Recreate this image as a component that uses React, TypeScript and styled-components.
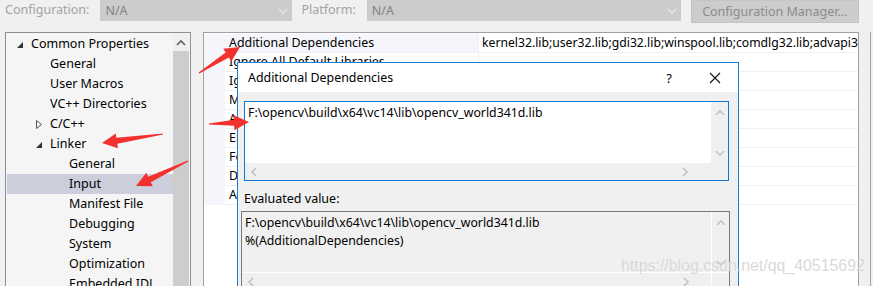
import React from 'react'
import styled, { createGlobalStyle } from 'styled-components'

const GlobalStyle = createGlobalStyle`
  html, body {
    margin: 0;
    padding: 0;
    background: #f0f0f0;
  }
  body {
    font-family: "Noto Sans", "Open Sans", sans-serif;
    font-size: 12px;
    color: #000;
  }
`

type TreeItem = { label: string; level: number; toggle?: 'open' | 'closed'; selected?: boolean }

const treeItems: TreeItem[] = [
  { label: 'Common Properties', level: 0, toggle: 'open' },
  { label: 'General', level: 1 },
  { label: 'User Macros', level: 1 },
  { label: 'VC++ Directories', level: 1 },
  { label: 'C/C++', level: 1, toggle: 'closed' },
  { label: 'Linker', level: 1, toggle: 'open' },
  { label: 'General', level: 2 },
  { label: 'Input', level: 2, selected: true },
  { label: 'Manifest File', level: 2 },
  { label: 'Debugging', level: 2 },
  { label: 'System', level: 2 },
  { label: 'Optimization', level: 2 },
  { label: 'Embedded IDL', level: 2 },
]

const properties = [
  { name: 'Additional Dependencies', value: 'kernel32.lib;user32.lib;gdi32.lib;winspool.lib;comdlg32.lib;advapi32.lib;shell32.lib;ole32.lib' },
  { name: 'Ignore All Default Libraries', value: '' },
  { name: 'Ignore Specific Default Libraries', value: '' },
  { name: 'Module Definition File', value: '' },
  { name: 'Add Module to Assembly', value: '' },
  { name: 'Embed Managed Resource File', value: '' },
  { name: 'Force Symbol References', value: '' },
  { name: 'Delay Loaded Dlls', value: '' },
  { name: 'Assembly Link Resource', value: '' },
]

// red annotation arrows: tail -> tip in page coordinates
const arrows = [
  { x1: 199, y1: 73, x2: 240, y2: 47 },
  { x1: 209, y1: 124, x2: 249, y2: 122 },
  { x1: 163, y1: 134, x2: 102, y2: 143 },
  { x1: 188, y1: 161, x2: 136, y2: 186 },
]

const arrowPoints = (a: { x1: number; y1: number; x2: number; y2: number }) => {
  const dx = a.x2 - a.x1
  const dy = a.y2 - a.y1
  const len = Math.hypot(dx, dy)
  const ux = dx / len
  const uy = dy / len
  const nx = -uy
  const ny = ux
  const head = 15
  const bx = a.x2 - ux * head
  const by = a.y2 - uy * head
  const pts = [
    [a.x1 + nx * 0.6, a.y1 + ny * 0.6],
    [bx + nx * 3, by + ny * 3],
    [bx + nx * 7.5, by + ny * 7.5],
    [a.x2, a.y2],
    [bx - nx * 7.5, by - ny * 7.5],
    [bx - nx * 3, by - ny * 3],
    [a.x1 - nx * 0.6, a.y1 - ny * 0.6],
  ]
  return pts.map((p) => p[0].toFixed(1) + ',' + p[1].toFixed(1)).join(' ')
}

const Chevron = ({ dir, color = '#c2c2c2' }: { dir: 'up' | 'down' | 'left' | 'right'; color?: string }) => {
  const d = {
    up: 'M1 6 L5 2 L9 6',
    down: 'M1 2 L5 6 L9 2',
    left: 'M6 1 L2 5 L6 9',
    right: 'M2 1 L6 5 L2 9',
  }[dir]
  const vertical = dir === 'up' || dir === 'down'
  return (
    <svg width={vertical ? 10 : 8} height={vertical ? 8 : 10} viewBox={vertical ? '0 0 10 8' : '0 0 8 10'}>
      <path d={d} fill="none" stroke={color} strokeWidth="1.6" />
    </svg>
  )
}

const Toggle = ({ open }: { open: boolean }) =>
  open ? (
    <svg width="6" height="6" viewBox="0 0 6 6">
      <path d="M6 0 L6 6 L0 6 Z" fill="#333" />
    </svg>
  ) : (
    <svg width="6" height="9" viewBox="0 0 6 9">
      <path d="M0.5 0.5 L5.5 4.5 L0.5 8.5 Z" fill="none" stroke="#555" strokeWidth="1" />
    </svg>
  )

const App = () => {
  return (
    <Page>
      <GlobalStyle />
      <TopBar>
        <FieldLabel>Configuration:</FieldLabel>
        <Combo $width={192}>
          N/A
          <Chevron dir="down" color="#e4e4e4" />
        </Combo>
        <FieldLabel>Platform:</FieldLabel>
        <Combo $width={314}>
          N/A
          <Chevron dir="down" color="#e4e4e4" />
        </Combo>
        <ManagerButton>Configuration Manager...</ManagerButton>
      </TopBar>

      <Main>
        <TreePanel>
          <TreeList>
            {treeItems.map((t, i) => (
              <TreeRow key={i} $level={t.level} $selected={t.selected}>
                {t.toggle && (
                  <ToggleSlot $level={t.level} $open={t.toggle === 'open'}>
                    <Toggle open={t.toggle === 'open'} />
                  </ToggleSlot>
                )}
                {t.label}
              </TreeRow>
            ))}
          </TreeList>
          <TreeScroll>
            <ScrollButton>
              <Chevron dir="up" color="#606060" />
            </ScrollButton>
            <Thumb />
          </TreeScroll>
        </TreePanel>

        <GridPanel>
          {properties.map((p, i) => (
            <PropRow key={i}>
              <Gutter />
              <PropName $selected={i === 0}>{p.name}</PropName>
              <PropValue>{p.value}</PropValue>
            </PropRow>
          ))}
        </GridPanel>
        <RightStrip />
      </Main>

      <Dialog>
        <TitleBar>
          <Title>Additional Dependencies</Title>
          <TitleButton>?</TitleButton>
          <TitleButton>
            <svg width="12" height="12" viewBox="0 0 12 12">
              <path d="M1 1 L11 11 M11 1 L1 11" stroke="#111" strokeWidth="1.1" />
            </svg>
          </TitleButton>
        </TitleBar>
        <DialogBody>
          <EditBox $focused>
            <EditText>F:\opencv\build\x64\vc14\lib\opencv_world341d.lib</EditText>
            <VBar>
              <Chevron dir="up" />
              <Chevron dir="down" />
            </VBar>
            <HBar>
              <Chevron dir="left" />
              <Chevron dir="right" />
            </HBar>
            <Corner />
          </EditBox>
          <SectionLabel>Evaluated value:</SectionLabel>
          <EditBox>
            <EditText $disabled>
              F:\opencv\build\x64\vc14\lib\opencv_world341d.lib
              <br />
              %(AdditionalDependencies)
            </EditText>
            <VBar $disabled>
              <Chevron dir="up" />
              <Chevron dir="down" />
            </VBar>
            <HBar $disabled>
              <Chevron dir="left" />
              <Chevron dir="right" />
            </HBar>
            <Corner />
          </EditBox>
        </DialogBody>
      </Dialog>

      <Overlay width="873" height="286" viewBox="0 0 873 286">
        {arrows.map((a, i) => (
          <polygon key={i} points={arrowPoints(a)} fill="#f2312f" />
        ))}
      </Overlay>

      <Watermark>https://blog.csdn.net/qq_40515692</Watermark>
    </Page>
  )
}

export default App

const Page = styled.div`
  position: relative;
  width: 873px;
  height: 286px;
  overflow: hidden;
  background: #f0f0f0;
`

const TopBar = styled.div`
  display: flex;
  align-items: flex-start;
  height: 23px;
  padding-left: 5px;
`

const FieldLabel = styled.div`
  height: 21px;
  line-height: 20px;
  color: #a3a3a3;
  font-size: 12.5px;
  margin-right: 11px;
  & + div {
    margin-right: 9px;
  }
`

const Combo = styled.div<{ $width: number }>`
  box-sizing: border-box;
  width: ${(p) => p.$width}px;
  height: 21px;
  background: #cccccc;
  color: #838383;
  font-size: 12.5px;
  line-height: 20px;
  padding: 0 4px 0 5px;
  display: flex;
  align-items: center;
  justify-content: space-between;
`

const ManagerButton = styled.div`
  box-sizing: border-box;
  width: 168px;
  height: 23px;
  margin-left: 1px;
  background: #cccccc;
  border: 1px solid #c4c4c4;
  color: #8c8c8c;
  font-size: 12.5px;
  display: flex;
  align-items: center;
  justify-content: center;
`

const Main = styled.div`
  display: flex;
  margin-top: 9px;
  padding-left: 5px;
  height: 260px;
`

const TreePanel = styled.div`
  box-sizing: border-box;
  width: 186px;
  height: 100%;
  border: 1px solid #8e8f94;
  background: #f5f5f5;
  display: flex;
  padding: 1px 1px 0 1px;
`

const TreeList = styled.div`
  flex: 1;
  display: flex;
  flex-direction: column;
`

const TreeRow = styled.div<{ $level: number; $selected?: boolean }>`
  position: relative;
  height: 20px;
  line-height: 20px;
  flex-shrink: 0;
  white-space: nowrap;
  font-size: 12.5px;
  padding-left: ${(p) => 24 + p.$level * 19}px;
  background: ${(p) => (p.$selected ? '#cccedb' : 'transparent')};
`

const ToggleSlot = styled.span<{ $level: number; $open: boolean }>`
  position: absolute;
  left: ${(p) => 10 + p.$level * 19}px;
  top: ${(p) => (p.$open ? 8 : 6)}px;
  display: flex;
`

const TreeScroll = styled.div`
  width: 16px;
  display: flex;
  flex-direction: column;
  background: #f0f0f0;
`

const ScrollButton = styled.div`
  height: 17px;
  display: flex;
  align-items: center;
  justify-content: center;
`

const Thumb = styled.div`
  flex: 1;
  background: #cdcdcd;
`

const GridPanel = styled.div`
  box-sizing: border-box;
  margin-left: 12px;
  width: 656px;
  height: 100%;
  border: 1px solid #a0a0a0;
  background: #fff;
  padding-top: 1px;
  display: flex;
  flex-direction: column;
`

const PropRow = styled.div`
  display: grid;
  grid-template-columns: 21px 253px 1fr;
  height: 19px;
  flex-shrink: 0;
`

const Gutter = styled.div`
  background: #f4f6fb;
`

const PropName = styled.div<{ $selected?: boolean }>`
  background: ${(p) => (p.$selected ? '#f4f6fb' : '#fff')};
  border-bottom: 1px solid #eef0f4;
  padding-left: 4px;
  line-height: 18px;
  font-size: 12.4px;
  white-space: nowrap;
  overflow: hidden;
`

const PropValue = styled.div`
  border-bottom: 1px solid #eef0f4;
  border-left: 1px solid #f0f0f0;
  padding-left: 3px;
  line-height: 18px;
  font-size: 12.2px;
  white-space: nowrap;
  overflow: hidden;
`

const RightStrip = styled.div`
  width: 11px;
  border-right: 1px solid #a6a6a6;
`

const Dialog = styled.div`
  position: absolute;
  left: 237px;
  top: 62px;
  box-sizing: border-box;
  width: 502px;
  height: 260px;
  border: 1px solid #1a7fd4;
  background: #f0f0f0;
  display: flex;
  flex-direction: column;
`

const TitleBar = styled.div`
  height: 29px;
  background: #fff;
  display: flex;
  align-items: center;
  padding-left: 10px;
`

const Title = styled.div`
  flex: 1;
  font-size: 12.4px;
`

const TitleButton = styled.div`
  width: 46px;
  height: 29px;
  display: flex;
  align-items: center;
  justify-content: center;
  font-size: 13px;
`

const DialogBody = styled.div`
  display: flex;
  flex-direction: column;
  padding: 9px 0 0 3px;
`

const EditBox = styled.div<{ $focused?: boolean }>`
  box-sizing: border-box;
  display: grid;
  grid-template-columns: 1fr 17px;
  grid-template-rows: 61px 17px;
  width: ${(p) => (p.$focused ? 485 : 489)}px;
  margin-left: ${(p) => (p.$focused ? 3 : 0)}px;
  border: 1px solid ${(p) => (p.$focused ? '#0f78d6' : '#7a7a7a')};
  background: ${(p) => (p.$focused ? '#fff' : '#f0f0f0')};
`

const EditText = styled.div<{ $disabled?: boolean }>`
  padding: 2px 0 0 3px;
  font-size: 12.3px;
  line-height: 18px;
  white-space: nowrap;
  background: ${(p) => (p.$disabled ? '#f0f0f0' : '#fff')};
  border-right: 1px solid ${(p) => (p.$disabled ? '#fff' : 'transparent')};
  border-bottom: 1px solid ${(p) => (p.$disabled ? '#fff' : 'transparent')};
`

const VBar = styled.div<{ $disabled?: boolean }>`
  background: #f0f0f0;
  display: flex;
  flex-direction: column;
  align-items: center;
  justify-content: space-between;
  padding: 7px 0 5px;
  border-bottom: 1px solid ${(p) => (p.$disabled ? '#fff' : 'transparent')};
`

const HBar = styled.div<{ $disabled?: boolean }>`
  background: #f0f0f0;
  display: flex;
  align-items: center;
  justify-content: space-between;
  padding: 0 21px 0 5px;
  border-right: 1px solid ${(p) => (p.$disabled ? '#fff' : 'transparent')};
`

const Corner = styled.div`
  background: #f0f0f0;
`

const SectionLabel = styled.div`
  margin: 9px 0 3px 3px;
  font-size: 12.5px;
  line-height: 18px;
`

const Overlay = styled.svg`
  position: absolute;
  left: 0;
  top: 0;
  pointer-events: none;
`

const Watermark = styled.div`
  position: absolute;
  left: 621px;
  top: 257px;
  font-family: "Liberation Sans", Arial, sans-serif;
  font-size: 15.9px;
  color: rgba(205, 205, 205, 0.75);
  text-shadow: 0 0 1px rgba(255, 255, 255, 0.6);
  pointer-events: none;
  white-space: nowrap;
`
